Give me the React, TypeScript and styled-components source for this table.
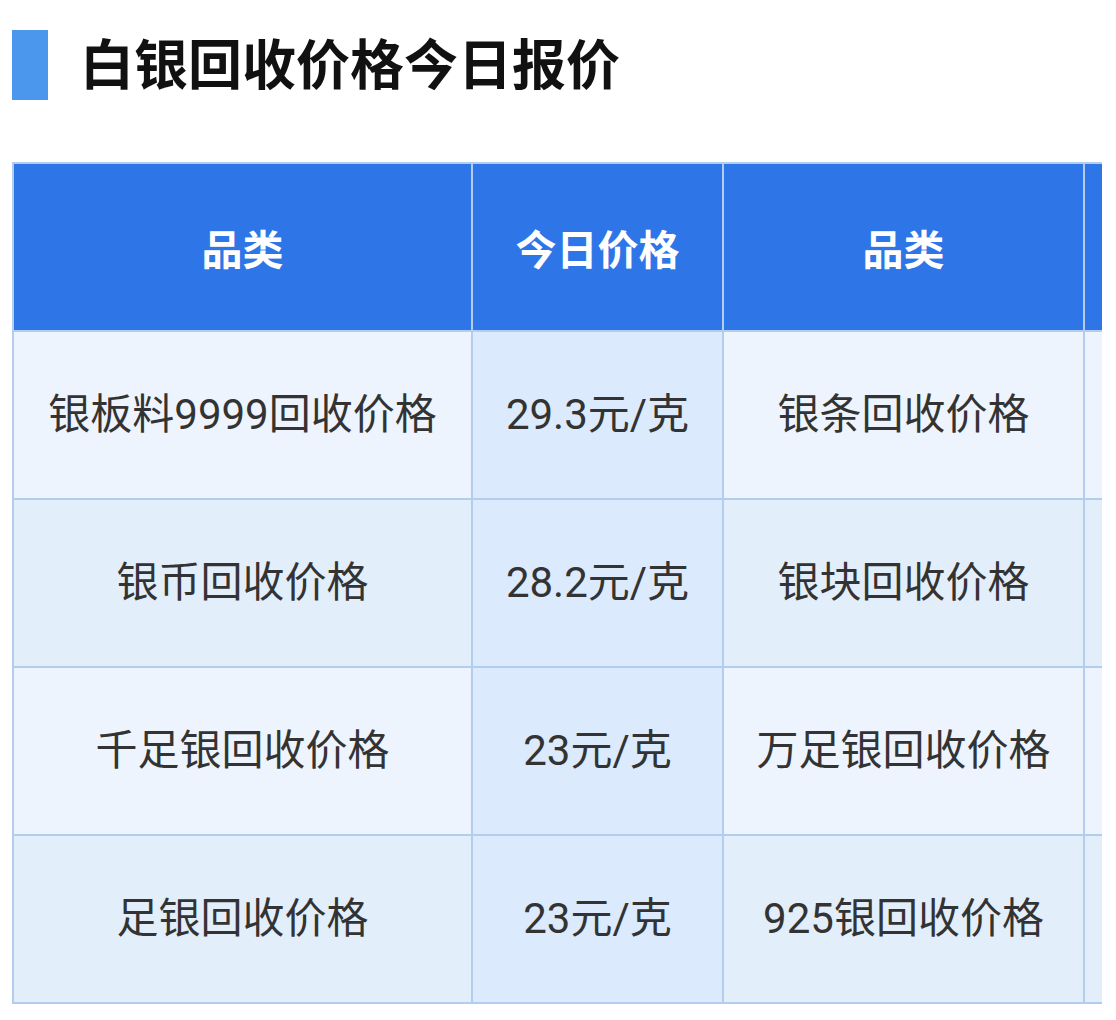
import React from 'react';
import styled, { createGlobalStyle } from 'styled-components';

const GlobalStyle = createGlobalStyle`
  body {
    margin: 0;
    background: #fff;
    font-family: Roboto, "Noto Sans CJK SC", sans-serif;
  }
`;

const Page = styled.div`
  padding: 30px 14px 0 12px;
`;

const Heading = styled.div`
  display: flex;
  align-items: center;
  gap: 32px;
  height: 70px;
`;

const Bar = styled.span`
  width: 36px;
  height: 70px;
  background: #4b97ee;
`;

const Title = styled.h1`
  margin: 0 0 6px;
  font-family: "Noto Sans CJK SC", sans-serif;
  font-size: 54px;
  font-weight: 700;
  color: #111;
  line-height: 1;
`;

const Scroller = styled.div`
  margin-top: 62px;
  overflow: hidden;
`;

const Table = styled.table`
  border-collapse: collapse;
  table-layout: fixed;
  width: 1330px;
`;

const HeadCell = styled.th`
  height: 166px;
  background: #2e75e8;
  color: #fff;
  font-family: "Noto Sans CJK SC", sans-serif;
  font-size: 41px;
  font-weight: 700;
  line-height: 1;
  border: 2px solid #b3cdee;
  text-align: center;
  padding: 0;
`;

const Cell = styled.td<{ $price?: boolean; $even?: boolean }>`
  height: 166px;
  background: ${(p) => (p.$price ? '#dbeafc' : p.$even ? '#e3eefb' : '#edf4fd')};
  color: #333;
  font-size: 42px;
  line-height: 1;
  border: 2px solid #b3cdee;
  text-align: center;
  padding: 0;
  white-space: nowrap;
`;

const rows = [
  ['银板料9999回收价格', '29.3元/克', '银条回收价格'],
  ['银币回收价格', '28.2元/克', '银块回收价格'],
  ['千足银回收价格', '23元/克', '万足银回收价格'],
  ['足银回收价格', '23元/克', '925银回收价格'],
];

const App: React.FC = () => {
  return (
    <Page>
      <GlobalStyle />
      <Heading>
        <Bar />
        <Title>白银回收价格今日报价</Title>
      </Heading>
      <Scroller>
        <Table>
          <colgroup>
            <col style={{ width: 459 }} />
            <col style={{ width: 251 }} />
            <col style={{ width: 361 }} />
            <col style={{ width: 259 }} />
          </colgroup>
          <thead>
            <tr>
              <HeadCell>品类</HeadCell>
              <HeadCell>今日价格</HeadCell>
              <HeadCell>品类</HeadCell>
              <HeadCell />
            </tr>
          </thead>
          <tbody>
            {rows.map((r, i) => (
              <tr key={i}>
                {r.map((c, j) => (
                  <Cell key={j} $price={j === 1} $even={i % 2 === 1}>
                    {c}
                  </Cell>
                ))}
                <Cell $even={i % 2 === 1} />
              </tr>
            ))}
          </tbody>
        </Table>
      </Scroller>
    </Page>
  );
};

export default App;
